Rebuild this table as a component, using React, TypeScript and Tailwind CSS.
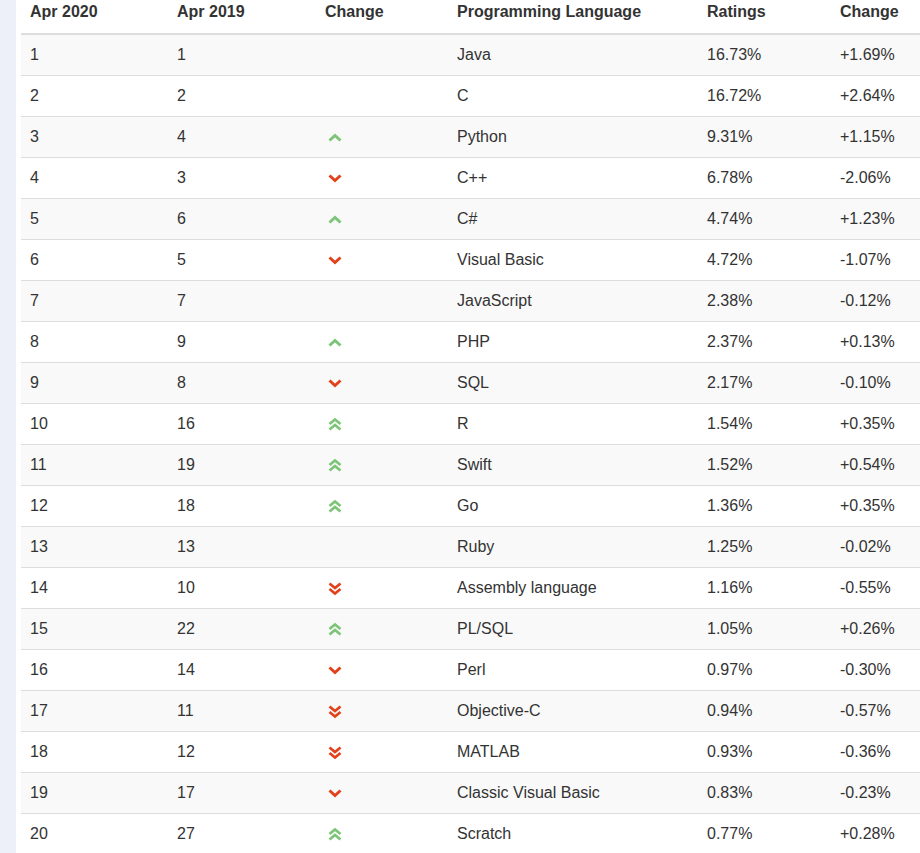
import React from 'react';

type Trend = 'none' | 'up' | 'down' | 'up2' | 'down2';

const rows: [number, number, Trend, string, string, string][] = [
  [1, 1, 'none', 'Java', '16.73%', '+1.69%'],
  [2, 2, 'none', 'C', '16.72%', '+2.64%'],
  [3, 4, 'up', 'Python', '9.31%', '+1.15%'],
  [4, 3, 'down', 'C++', '6.78%', '-2.06%'],
  [5, 6, 'up', 'C#', '4.74%', '+1.23%'],
  [6, 5, 'down', 'Visual Basic', '4.72%', '-1.07%'],
  [7, 7, 'none', 'JavaScript', '2.38%', '-0.12%'],
  [8, 9, 'up', 'PHP', '2.37%', '+0.13%'],
  [9, 8, 'down', 'SQL', '2.17%', '-0.10%'],
  [10, 16, 'up2', 'R', '1.54%', '+0.35%'],
  [11, 19, 'up2', 'Swift', '1.52%', '+0.54%'],
  [12, 18, 'up2', 'Go', '1.36%', '+0.35%'],
  [13, 13, 'none', 'Ruby', '1.25%', '-0.02%'],
  [14, 10, 'down2', 'Assembly language', '1.16%', '-0.55%'],
  [15, 22, 'up2', 'PL/SQL', '1.05%', '+0.26%'],
  [16, 14, 'down', 'Perl', '0.97%', '-0.30%'],
  [17, 11, 'down2', 'Objective-C', '0.94%', '-0.57%'],
  [18, 12, 'down2', 'MATLAB', '0.93%', '-0.36%'],
  [19, 17, 'down', 'Classic Visual Basic', '0.83%', '-0.23%'],
  [20, 27, 'up2', 'Scratch', '0.77%', '+0.28%'],
];

function TrendIcon({ trend }: { trend: Trend }) {
  if (trend === 'none') return null;
  const up = trend === 'up' || trend === 'up2';
  const color = up ? '#7cc576' : '#e2421b';
  if (trend === 'up' || trend === 'down') {
    return (
      <svg width="16" height="11" viewBox="0 0 16 11">
        <polyline
          points={up ? '2.5,8.5 8,3.5 13.5,8.5' : '2.5,2.5 8,7.5 13.5,2.5'}
          fill="none"
          stroke={color}
          strokeWidth="3"
        />
      </svg>
    );
  }
  return (
    <svg width="16" height="15" viewBox="0 0 16 15">
      <polyline
        points={up ? '2.5,7 8,2.5 13.5,7' : '2.5,2.5 8,7 13.5,2.5'}
        fill="none"
        stroke={color}
        strokeWidth="2.7"
      />
      <polyline
        points={up ? '2.5,12.5 8,8 13.5,12.5' : '2.5,8 8,12.5 13.5,8'}
        fill="none"
        stroke={color}
        strokeWidth="2.7"
      />
    </svg>
  );
}

const cols = 'grid grid-cols-[147px_148px_132px_250px_133px_1fr]';

export default function App() {
  return (
    <div className="flex w-[920px] h-[853px] overflow-hidden bg-white text-[16px] text-[#333] font-['Liberation_Sans',Arial,sans-serif]">
      <div className="w-[16px] shrink-0 bg-[#eef0f9]" />
      <div className="w-[5px] shrink-0" />
      <div className="flex-1 flex flex-col">
        {/* Header */}
        <div className={`${cols} h-[35px] shrink-0 border-b-2 border-[#ddd] font-bold leading-6`}>
          <div className="pl-[9px]">Apr 2020</div>
          <div className="pl-[9px]">Apr 2019</div>
          <div className="pl-[9px]">Change</div>
          <div className="pl-[9px]">Programming Language</div>
          <div className="pl-[9px]">Ratings</div>
          <div className="pl-[9px]">Change</div>
        </div>

        {rows.map(([now, prev, trend, lang, rating, change], i) => (
          <div
            key={now}
            className={`${cols} h-[41px] shrink-0 items-center border-b border-[#ddd] ${
              i % 2 === 0 ? 'bg-[#f9f9f9]' : 'bg-white'
            }`}
          >
            <div className="pl-[9px]">{now}</div>
            <div className="pl-[9px]">{prev}</div>
            <div className="pl-[11px] flex items-center">
              <TrendIcon trend={trend} />
            </div>
            <div className="pl-[9px]">{lang}</div>
            <div className="pl-[9px]">{rating}</div>
            <div className="pl-[9px]">{change}</div>
          </div>
        ))}
      </div>
    </div>
  );
}
